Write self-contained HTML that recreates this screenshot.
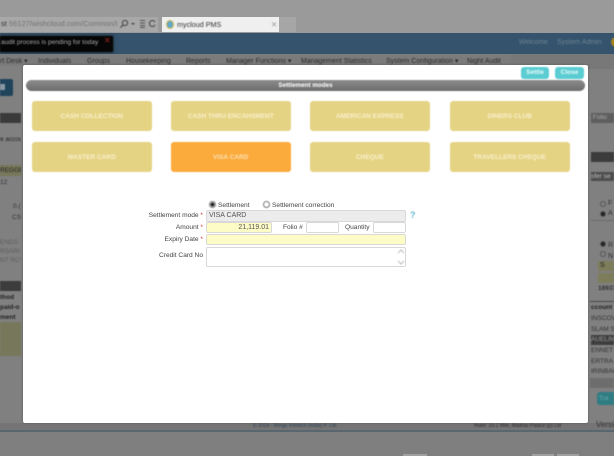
<!DOCTYPE html>
<html><head><meta charset="utf-8"><style>
html,body{margin:0;padding:0;background:#7e7e7e}
body{width:614px;height:456px;overflow:hidden;position:relative;font-family:"Liberation Sans",sans-serif;}
.a{position:absolute;white-space:nowrap}
.s{filter:blur(.45px)}
.b{position:absolute;width:119.5px;height:30px;background:#e5d384;border-radius:3px;color:#f8f0cc;font-size:6.5px;font-weight:bold;line-height:31px;text-align:center;filter:blur(.4px)}
.l{position:absolute;font-size:6.6px;color:#444;white-space:nowrap;filter:blur(.3px)}
.i{position:absolute;border:1px solid #d8d8d8;border-radius:2px;box-sizing:border-box;background:#fff}
.y{background:#fdfbc6}
.r{color:#d33}
</style></head><body>
<div class="a" style="left:0;top:0;width:614px;height:33px;background:#9a9a9a"></div>
<div class="a" style="left:0;top:17px;width:158px;height:15px;background:#a8a8a8"></div>
<div class="a s" style="left:1px;top:18px;font-size:7.5px;color:#737373;line-height:11px"><span style="color:#333">st</span> 56127/wishcloud.com/Common/I</div>
<svg class="a s" style="left:119px;top:19px" width="38" height="10" viewBox="0 0 38 10"><circle cx="6" cy="4" r="2.6" fill="none" stroke="#444" stroke-width="1"/><path d="M4 6 L1.5 8.5" stroke="#444" stroke-width="1.2"/><path d="M12 4 L16 4 L14 6Z" fill="#444"/><path d="M21 1.5h5M21 4h5M21 6.5h5M21 8.5h5" stroke="#555" stroke-width=".9"/><path d="M36 3 A3 3 0 1 0 36 6" fill="none" stroke="#444" stroke-width="1"/></svg>
<div class="a" style="left:162px;top:17px;width:117px;height:15px;background:#efefef"></div>
<div class="a" style="left:279px;top:17px;width:17px;height:15px;background:#a6a6a6"></div>
<div class="a s" style="left:166px;top:20px;width:8px;height:9px;border-radius:50%;background:#62a8c8;border:1px solid #d8b84a;box-sizing:border-box"></div>
<div class="a s" style="left:177px;top:19px;font-size:7.2px;color:#333;line-height:11px">mycloud PMS</div>
<div class="a s" style="left:271px;top:19px;font-size:7.5px;color:#999;line-height:11px">✕</div>

<div class="a" style="left:0;top:33px;width:614px;height:21px;background:#35536c"></div>
<div class="a s" style="left:0;top:36px;width:113px;height:16px;background:#060606;box-shadow:0 0 3px #111"></div>
<div class="a s" style="left:1px;top:38px;font-size:6.5px;color:#aaa;line-height:10px">audit process is pending for today</div>
<div class="a s" style="left:104px;top:36px;font-size:8px;font-weight:bold;color:#7a1a1a;line-height:10px">✕</div>
<div class="a s" style="left:519px;top:38px;font-size:7px;color:#6d8496;line-height:10px">Welcome</div>
<div class="a s" style="left:557px;top:38px;font-size:7px;color:#6d8496;line-height:10px">System Admin</div>
<div class="a s" style="left:611px;top:37px;width:10px;height:10px;border-radius:50%;background:#a88420"></div>

<div class="a" style="left:0;top:54px;width:511px;height:12px;background:#7b7b7b"></div>
<div class="a" style="left:511px;top:54px;width:103px;height:15px;background:#787878"></div>
<div class="a s" style="left:0;top:57px;width:511px;height:9px;overflow:hidden;font-size:7px;color:#2c2c2c;line-height:10px">
<span class="a" style="left:0">rt Desk ▾</span><span class="a" style="left:38px">Individuals</span><span class="a" style="left:87px">Groups</span><span class="a" style="left:126px">Housekeeping</span><span class="a" style="left:186px">Reports</span><span class="a" style="left:226px">Manager Functions ▾</span><span class="a" style="left:301px">Management Statistics</span><span class="a" style="left:386px">System Configuration ▾</span><span class="a" style="left:467px">Night Audit</span></div>

<!-- left column -->
<div class="a" style="left:0;top:66px;width:23px;height:357px;background:#808080"></div>
<div class="a s" style="left:0;top:79px;width:13px;height:17px;background:#1f445c;border-radius:0 2px 2px 0"></div>
<div class="a s" style="left:0;top:84px;width:5px;height:6px;background:#8a98a2"></div>
<div class="a s" style="left:0;top:113px;width:21px;height:10px;background:#3a3a3a"></div>
<div class="a s" style="left:0;top:135px;font-size:6.5px;color:#222;line-height:9px;width:21px;overflow:hidden">e accou</div>
<div class="a s" style="left:0;top:165px;width:21px;height:11px;background:#77775a;font-size:6.5px;color:#222;line-height:11px;overflow:hidden">REGGE</div>
<div class="a s" style="left:0;top:178px;width:21px;font-size:6.5px;color:#333;line-height:10px;overflow:hidden">12</div>
<div class="a s" style="left:13px;top:202px;font-size:6.5px;color:#333;line-height:10px">0.(</div>
<div class="a s" style="left:12px;top:213px;font-size:6.5px;color:#333;line-height:10px">CS</div>
<div class="a s" style="left:0;top:238px;width:21px;font-size:6.5px;color:#5e5e5e;line-height:9px;overflow:hidden">ENDS<br>RSARI<br>NT RCV</div>
<div class="a s" style="left:0;top:281px;width:21px;height:10px;background:#3c3c3c"></div>
<div class="a s" style="left:0;top:293px;width:21px;font-size:6.5px;font-weight:bold;color:#222;line-height:10px;overflow:hidden">thod<br>paid-o<br>ment</div>
<div class="a s" style="left:0;top:322px;width:21px;height:34px;background:#77775c"></div>

<!-- right column -->
<div class="a" style="left:588px;top:69px;width:26px;height:354px;background:#808080"></div>
<div class="a s" style="left:591px;top:113px;width:23px;height:10px;background:#5e5e5e;font-size:6.5px;color:#aaa;line-height:10px;overflow:hidden">&nbsp;Folio</div>
<div class="a s" style="left:591px;top:152px;width:23px;height:10px;background:#3c3c3c"></div>
<div class="a s" style="left:591px;top:172px;width:23px;height:9px;background:#4e4e4e;font-size:6.5px;color:#bbb;line-height:9px;overflow:hidden">sfer se</div>
<div class="a s" style="left:600px;top:201px;width:6px;height:6px;border:1px solid #555;border-radius:50%;box-sizing:border-box"></div>
<div class="a s" style="left:600px;top:211px;width:6px;height:6px;background:#222;border:1px solid #555;border-radius:50%;box-sizing:border-box"></div>
<div class="a s" style="left:608px;top:200px;font-size:7px;color:#333;line-height:8px">F<br><span style="line-height:12px">A</span></div>
<div class="a s" style="left:591px;top:220px;width:23px;height:1px;background:#6a6a6a"></div>
<div class="a s" style="left:600px;top:241px;width:6px;height:6px;background:#222;border:1px solid #555;border-radius:50%;box-sizing:border-box"></div>
<div class="a s" style="left:600px;top:251px;width:6px;height:6px;border:1px solid #555;border-radius:50%;box-sizing:border-box"></div>
<div class="a s" style="left:608px;top:240px;font-size:7px;color:#333;line-height:11px">R<br>N</div>
<div class="a s" style="left:598px;top:261px;width:16px;height:10px;background:#7d7d5c;font-size:7px;color:#222;line-height:10px">&nbsp;S</div>
<div class="a s" style="left:598px;top:273px;width:16px;height:10px;background:#7d7d5c"></div>
<div class="a s" style="left:598px;top:284px;font-size:6.5px;font-weight:bold;color:#333;line-height:10px">18937</div>
<div class="a s" style="left:590px;top:301px;width:24px;height:1px;background:#444"></div>
<div class="a s" style="left:591px;top:303px;font-size:6.5px;font-weight:bold;color:#222;line-height:10px">ccount</div>
<div class="a s" style="left:591px;top:314px;font-size:6.5px;color:#333;line-height:10.5px">INSCOV<br>SLAM S</div>
<div class="a s" style="left:591px;top:335px;width:23px;height:10px;background:#3e3e3e;font-size:6.5px;color:#999;line-height:10px;overflow:hidden">AUELIM</div>
<div class="a s" style="left:591px;top:346px;font-size:6.5px;color:#333;line-height:10.5px">ENNET<br>ERTRA<br>IRINBAC</div>
<div class="a s" style="left:590px;top:378px;width:24px;height:10px;background:#6d6d6d"></div>
<div class="a s" style="left:597px;top:392px;width:17px;height:13px;background:#2f7c82;border-radius:3px 0 0 3px;font-size:6.5px;color:#6aa;line-height:13px">&nbsp;Tra</div>

<!-- footer -->
<div class="a" style="left:0;top:423px;width:614px;height:7px;background:#757575"></div>
<div class="a" style="left:0;top:430px;width:614px;height:2px;background:#586670"></div>
<div class="a" style="left:0;top:432px;width:614px;height:24px;background:#7f7f7f"></div>
<div class="a s" style="left:253px;top:423px;font-size:5px;color:#2e4258;line-height:7px">© 2014 - Wings Infotech (India) P. Ltd.</div>
<div class="a s" style="left:474px;top:423px;font-size:5px;color:#2a2a2a;line-height:7px">Hotel: 10-1 Mile, Madras Palace (p) Ltd</div>
<div class="a s" style="left:596px;top:420px;font-size:8px;color:#333;line-height:10px">Versio</div>
<div class="a" style="left:403px;top:454px;width:24px;height:2px;background:#a0a0a0"></div>
<div class="a" style="left:532px;top:454px;width:22px;height:2px;background:#a0a0a0"></div>
<div class="a" style="left:557px;top:454px;width:22px;height:2px;background:#a0a0a0"></div>

<!-- modal -->
<div class="a" style="left:23px;top:65px;width:565px;height:358px;background:#fff;border-radius:2px;box-shadow:0 0 2px #555"></div>
<div class="a s" style="left:521px;top:67px;width:28px;height:12px;background:#5bcdd2;border-radius:3px;color:#e8fafa;font-size:6.5px;font-weight:bold;text-align:center;line-height:12px">Settle</div>
<div class="a s" style="left:555px;top:67px;width:29px;height:12px;background:#5bcdd2;border-radius:3px;color:#e8fafa;font-size:6.5px;font-weight:bold;text-align:center;line-height:12px">Close</div>
<div class="a s" style="left:26px;top:80px;width:559px;height:11px;border-radius:6px;background:linear-gradient(#8c8c8c,#6c6c6c);color:#fff;font-size:6.3px;font-weight:bold;text-align:center;line-height:11px">Settlement modes</div>

<div class="b" style="left:32px;top:101px">CASH COLLECTION</div>
<div class="b" style="left:171px;top:101px">CASH THRU ENCAHSMENT</div>
<div class="b" style="left:310px;top:101px">AMERICAN EXPRESS</div>
<div class="b" style="left:450px;top:101px">DINERS CLUB</div>
<div class="b" style="left:32px;top:142px">MASTER CARD</div>
<div class="b" style="left:171px;top:142px;background:#fbaa3c;color:#fbe0b0">VISA CARD</div>
<div class="b" style="left:310px;top:142px">CHEQUE</div>
<div class="b" style="left:450px;top:142px">TRAVELLERS CHEQUE</div>

<!-- form -->
<div class="a s" style="left:209px;top:201px;width:7px;height:7px;border:1px solid #777;border-radius:50%;box-sizing:border-box;background:radial-gradient(#222 50%,#fff 60%)"></div>
<div class="l" style="left:218px;top:202px">Settlement</div>
<div class="a s" style="left:263px;top:201px;width:7px;height:7px;border:1px solid #777;border-radius:50%;box-sizing:border-box;background:#fff"></div>
<div class="l" style="left:272px;top:202px">Settlement correction</div>

<div class="l" style="right:411px;top:212px">Settlement mode <span class="r">*</span></div>
<div class="i" style="left:206px;top:210px;width:200px;height:12px;background:#ececec;font-size:7px;color:#555;line-height:10px;padding-left:2px">VISA CARD</div>
<div class="a s" style="left:410px;top:210px;font-size:9px;font-weight:bold;color:#66b6d2;line-height:11px">?</div>

<div class="l" style="right:411px;top:224px">Amount <span class="r">*</span></div>
<div class="i y" style="left:206px;top:222px;width:66px;height:11px;font-size:7px;color:#555;line-height:10px;text-align:right;padding-right:2px">21,119.01</div>
<div class="l" style="left:283px;top:224px">Folio #</div>
<div class="i" style="left:306px;top:222px;width:33px;height:11px"></div>
<div class="l" style="left:345px;top:224px">Quantity</div>
<div class="i" style="left:373px;top:222px;width:33px;height:11px"></div>

<div class="l" style="right:411px;top:236px">Expiry Date <span class="r">*</span></div>
<div class="i y" style="left:206px;top:234px;width:200px;height:11px"></div>

<div class="l" style="right:411px;top:252px">Credit Card No</div>
<div class="i" style="left:206px;top:247px;width:200px;height:20px"></div>
<svg class="a s" style="left:397px;top:248px" width="8" height="18" viewBox="0 0 8 18"><path d="M1 5 L4 2 L7 5M1 13 L4 16 L7 13" fill="none" stroke="#bbb" stroke-width="1"/></svg>
</body></html>
